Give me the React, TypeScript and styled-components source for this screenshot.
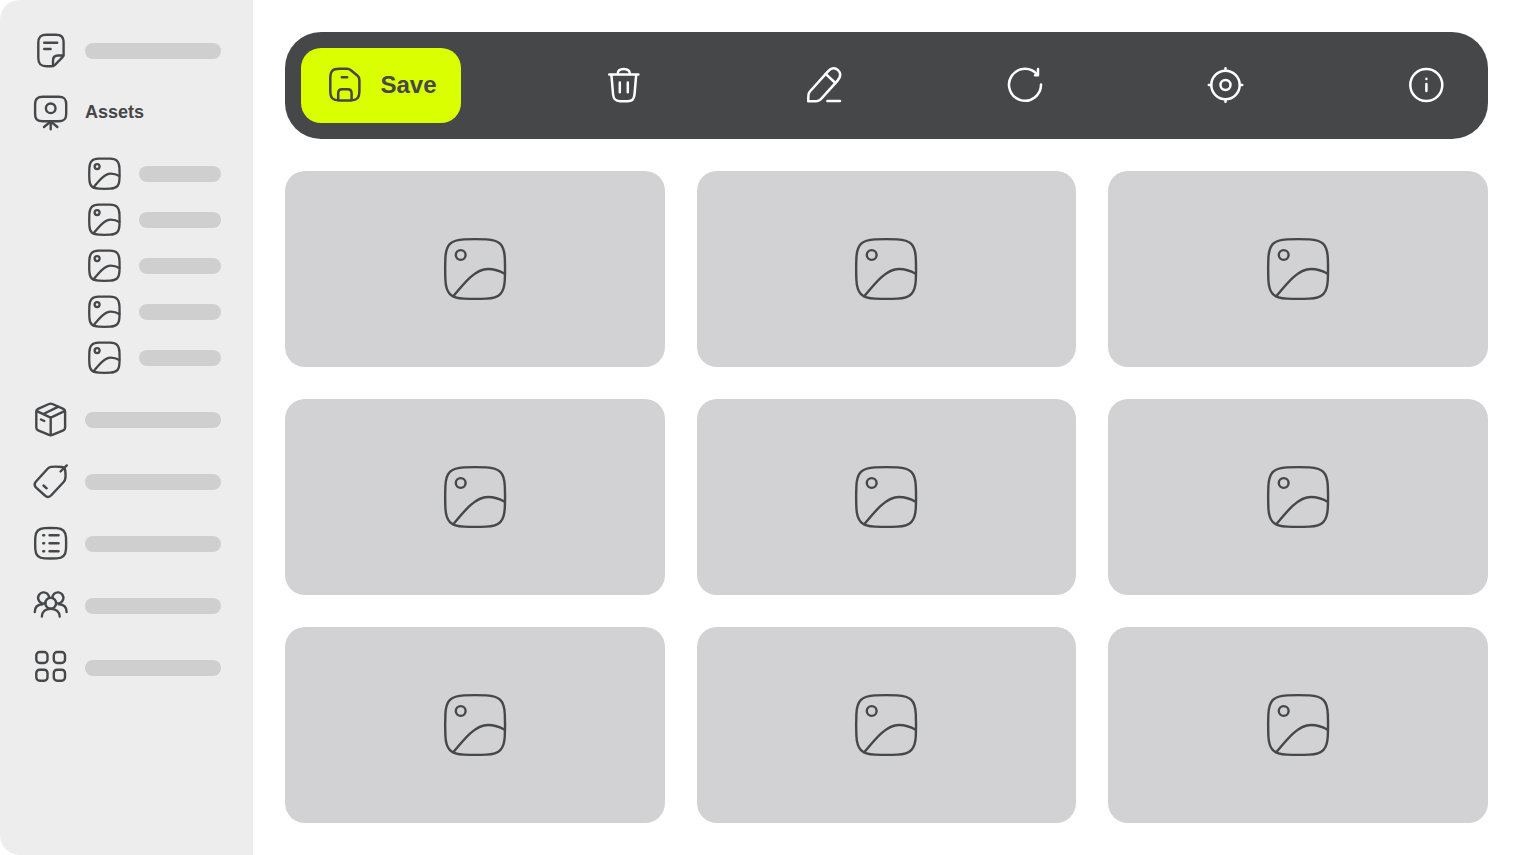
import React from "react";
import styled, { createGlobalStyle } from "styled-components";

const ink = "#464749";

const GlobalStyle = createGlobalStyle`
  *, *::before, *::after { box-sizing: border-box; }
  body {
    margin: 0;
    background: #ffffff;
    color: ${ink};
    font-family: "Liberation Sans", Arial, sans-serif;
  }
`;

const Page = styled.div`
  display: flex;
  min-height: 100vh;
`;

const Sidebar = styled.nav`
  flex: 0 0 253px;
  padding: 32px;
  background: #ededed;
  border-radius: 20px 0 0 20px;
`;

const NavList = styled.ul`
  display: flex;
  flex-direction: column;
  gap: 25px;
  margin: 0;
  padding: 0;
  list-style: none;
`;

const SubList = styled(NavList)`
  gap: 9px;
  margin-top: 24px;
  padding-left: 54px;
`;

const NavLink = styled.a`
  display: flex;
  align-items: center;
  gap: 16px;
  height: 37px;
  color: inherit;
  font-size: 18px;
  font-weight: 700;
  text-decoration: none;
`;

const Placeholder = styled.span`
  flex: 1;
  height: 16px;
  border-radius: 8px;
  background: #cfcfcf;
`;

const Glyph = styled.svg<{ $size: number; $weight: number }>`
  display: block;
  flex: none;
  width: ${(p) => p.$size}px;
  height: ${(p) => p.$size}px;
  fill: none;
  stroke: currentColor;
  stroke-width: ${(p) => p.$weight};
  stroke-linecap: round;
  stroke-linejoin: round;
`;

const Main = styled.main`
  flex: 1;
  display: flex;
  flex-direction: column;
  gap: 32px;
  min-width: 0;
  padding: 32px;
`;

const Toolbar = styled.div`
  display: flex;
  align-items: center;
  justify-content: space-between;
  padding: 16px 24px 16px 16px;
  border-radius: 36px;
  background: ${ink};
`;

const ToolButton = styled.button`
  display: flex;
  align-items: center;
  justify-content: center;
  width: 76px;
  height: 75px;
  padding: 0 0 1px;
  border: 0;
  background: none;
  color: #ffffff;
  font: inherit;
  cursor: pointer;
`;

const SaveButton = styled(ToolButton)`
  gap: 15px;
  width: 160px;
  border-radius: 20px;
  background: #daff00;
  color: ${ink};
  font-size: 24px;
  font-weight: 700;
`;

const Gallery = styled.div`
  flex: 1;
  display: grid;
  grid-template-columns: repeat(3, 1fr);
  grid-auto-rows: minmax(160px, 1fr);
  gap: 32px;
`;

const Card = styled.figure`
  display: flex;
  align-items: center;
  justify-content: center;
  margin: 0;
  border-radius: 20px;
  background: #d2d2d4;
`;

type IconProps = { children: React.ReactNode };

const NavIcon = ({ children }: IconProps) => (
  <Glyph $size={37} $weight={2.4} viewBox="0 0 37 37" aria-hidden="true">
    {children}
  </Glyph>
);

const ToolIcon = ({ children }: IconProps) => (
  <Glyph $size={40} $weight={2.5} viewBox="0 0 40 40" aria-hidden="true">
    {children}
  </Glyph>
);

const PictureShape = () => (
  <>
    <path d="M21 2.4C28 2.1 36.3 2.1 43.3 2.4C56.5 3 61.2 7.7 61.8 21C62.1 28 62.1 36 61.8 43C61.2 56.3 56.5 61 43.3 61.6C36.3 61.9 28 61.9 21 61.6C7.7 61 3 56.3 2.4 43C2.1 36 2.1 28 2.4 21C3 7.7 7.7 3 21 2.4Z" />
    <circle cx="17.7" cy="18" r="4.9" />
    <path d="M10.3 59.3C22 45 32.5 32 45 32C51 32 57 34 61.7 36.7" />
  </>
);

const SmallPicture = () => (
  <Glyph $size={37} $weight={4.5} viewBox="-4.2 -4.8 73 73" aria-hidden="true">
    <PictureShape />
  </Glyph>
);

const LargePicture = () => (
  <Glyph $size={64} $weight={2.4} viewBox="0 0 64 64" aria-hidden="true">
    <PictureShape />
  </Glyph>
);

const NoteIcon = () => (
  <NavIcon>
    <path d="M31.6 22.5V11C31.6 5 29.5 2.8 23.5 2.8H14.5C8.5 2.8 6.3 5 6.3 11V26C6.3 32 8.5 34.2 14.5 34.2H19.5C21 34.2 22 33.8 23 32.8L30.3 25.3C31.2 24.4 31.6 23.6 31.6 22.5Z" />
    <path d="M21 34V28.5C21 24.8 22.5 23.5 26 23.5H31.4M12.2 10.7H25.2M12.2 17H18.6" />
  </NavIcon>
);

const BoardIcon = () => (
  <NavIcon>
    <path d="M11 2.8H26.5C32.2 2.8 34.2 4.8 34.2 10.5V19.7C34.2 25.4 32.2 27.3 26.5 27.3H11C5.3 27.3 3.1 25.4 3.1 19.7V10.5C3.1 4.8 5.3 2.8 11 2.8Z" />
    <circle cx="18.7" cy="14.3" r="4.8" />
    <path d="M18.7 27.5V35.2M18.2 27.8L12 33M19.2 27.8L25.4 33" />
  </NavIcon>
);

const BoxIcon = () => (
  <NavIcon>
    <path d="M17 3C18.2 2.5 19.2 2.5 20.4 3L31.3 7.9C32.5 8.5 33.1 9.3 33.1 10.6V26.6C33.1 27.9 32.5 28.8 31.3 29.3L20.4 33.9C19.2 34.4 18.2 34.4 17 33.9L6.1 29.3C4.9 28.8 4.3 27.9 4.3 26.6V10.6C4.3 9.3 4.9 8.5 6.1 7.9Z" />
    <path d="M4.9 10.2L17 15.8C18.2 16.3 19.2 16.3 20.4 15.8L32.5 10.2M18.7 16.4V34M11.4 13L26 5.8M9 18.5L12.3 20" />
  </NavIcon>
);

const TagIcon = () => (
  <NavIcon>
    <path d="M19 3.9C23 3.4 26.5 3.6 29.8 4C32.2 4.3 33 5.2 33.2 7.5C33.6 10.5 33.7 13 33.3 15.5C33.1 17 32.6 17.9 31.6 19L19.3 32.3C17.2 34.5 15 34.5 12.9 32.5L4.4 24.9C2.2 22.9 2 20.8 4 18.5L15.6 5.8C16.6 4.7 17.5 4.1 19 3.9Z" />
    <path d="M28.5 8.5L34.8 2.4M11.5 22.5L14.7 25.3" />
  </NavIcon>
);

const ListIcon = () => (
  <NavIcon>
    <path d="M12.5 3.1C16.5 2.9 20.8 2.9 24.8 3.1C31 3.4 33.7 6.1 34 12.3C34.2 16 34.2 20 34 24.2C33.7 30.4 31 33.1 24.8 33.4C20.8 33.6 16.5 33.6 12.5 33.4C6.3 33.1 3.6 30.4 3.3 24.2C3.1 20 3.1 16 3.3 12.3C3.6 6.1 6.3 3.4 12.5 3.1Z" />
    <path d="M11.2 10.2H12.2M11.2 18.2H12.2M11.2 26.2H12.2M17.5 10.2H26.6M17.5 18.2H26.6M17.5 26.2H26.6" />
  </NavIcon>
);

const PeopleIcon = () => (
  <NavIcon>
    <path d="M13.5 16A5.5 5.5 0 1 1 17.1 10.8M24 16A5.5 5.5 0 1 0 20.4 10.8" />
    <circle cx="18.7" cy="16.2" r="5.4" />
    <path d="M9.9 29.6C9.9 25 13.3 21.7 18.7 21.7S27.7 25 27.7 29.6M2.8 25C2.8 20.5 5.5 17.5 10.5 17.3M34.6 25C34.6 20.5 31.9 17.5 26.9 17.3" />
  </NavIcon>
);

const GridIcon = () => (
  <NavIcon>
    <rect x="4.3" y="3" width="11.2" height="11" rx="3.4" />
    <rect x="21.8" y="3" width="11.2" height="11" rx="3.4" />
    <rect x="4.3" y="20.7" width="11.2" height="11" rx="3.4" />
    <rect x="21.8" y="20.7" width="11.2" height="11" rx="3.4" />
  </NavIcon>
);

const SaveIcon = () => (
  <ToolIcon>
    <path d="M14.5 3.8H22C23.7 3.8 24.7 4.2 25.9 5.2L32.3 10.5C33.9 11.8 34.4 13 34.4 15V25.5C34.4 33 32.2 35.4 24.9 35.4H14.7C7.5 35.4 5.3 33 5.3 25.5V13.5C5.3 6 7.5 3.8 14.5 3.8Z" />
    <path d="M13.2 35.2V28.2C13.2 25.4 14.4 24.3 17 24.3H22.8C25.4 24.3 26.6 25.4 26.6 28.2V35.2M16.8 12.2H22.2" />
  </ToolIcon>
);

const TrashIcon = () => (
  <ToolIcon>
    <path d="M5.2 9.4H34.4M13.6 9.2C13.6 5.6 15.6 3.9 19.8 3.9S26 5.6 26 9.2M7.4 9.8L9.1 29.5C9.6 34.4 11.4 36.2 15.8 36.2H23.8C28.2 36.2 30 34.4 30.5 29.5L32.2 9.8M15.8 17.5V27.3M23.8 17.5V27.3" />
  </ToolIcon>
);

const PencilIcon = () => (
  <ToolIcon>
    <path d="M4.2 36.2L4.4 30.5C4.5 28.8 4.8 27.8 5.9 26.5L24 6.4C27.4 2.6 31 2.4 34 5.2C37 8.1 36.9 11.8 33.6 15.6L16.9 34.2C15.4 35.7 14.2 36.2 12.4 36.2Z" />
    <path d="M21.6 8.8L31.4 18M23.4 35.9H36" />
  </ToolIcon>
);

const RefreshIcon = () => (
  <ToolIcon>
    <path d="M36 19.4A16 16 0 1 1 32.6 9.9M33 4V10.2H30" />
  </ToolIcon>
);

const TargetIcon = () => (
  <ToolIcon>
    <circle cx="20.5" cy="20" r="14.2" />
    <circle cx="20.5" cy="20" r="5" />
    <path d="M20.5 3.3V5.5M20.5 34.5V36.7M3.8 20H6M35 20H37.2" />
  </ToolIcon>
);

const InfoIcon = () => (
  <ToolIcon>
    <circle cx="20.3" cy="20" r="16" />
    <path d="M20.4 19V26M20.4 13.8V13.9" />
  </ToolIcon>
);

const tools = [
  { label: "Delete", Icon: TrashIcon },
  { label: "Edit", Icon: PencilIcon },
  { label: "Refresh", Icon: RefreshIcon },
  { label: "Locate", Icon: TargetIcon },
  { label: "Info", Icon: InfoIcon },
];

const sections = [
  { label: "Products", Icon: BoxIcon },
  { label: "Tags", Icon: TagIcon },
  { label: "Lists", Icon: ListIcon },
  { label: "People", Icon: PeopleIcon },
  { label: "Apps", Icon: GridIcon },
];

export default function App() {
  return (
    <>
      <GlobalStyle />
      <Page>
        <Sidebar>
          <NavList>
            <li>
              <NavLink href="#notes" aria-label="Notes">
                <NoteIcon />
                <Placeholder />
              </NavLink>
            </li>
            <li>
              <NavLink href="#assets">
                <BoardIcon />
                Assets
              </NavLink>
              <SubList>
                {[1, 2, 3, 4, 5].map((n) => (
                  <li key={n}>
                    <NavLink href={`#asset-${n}`} aria-label={`Asset ${n}`}>
                      <SmallPicture />
                      <Placeholder />
                    </NavLink>
                  </li>
                ))}
              </SubList>
            </li>
            {sections.map(({ label, Icon }) => (
              <li key={label}>
                <NavLink href={`#${label.toLowerCase()}`} aria-label={label}>
                  <Icon />
                  <Placeholder />
                </NavLink>
              </li>
            ))}
          </NavList>
        </Sidebar>
        <Main>
          <Toolbar role="toolbar">
            <SaveButton type="button">
              <SaveIcon />
              Save
            </SaveButton>
            {tools.map(({ label, Icon }) => (
              <ToolButton key={label} type="button" aria-label={label}>
                <Icon />
              </ToolButton>
            ))}
          </Toolbar>
          <Gallery>
            {Array.from({ length: 9 }, (_, i) => (
              <Card key={i}>
                <LargePicture />
              </Card>
            ))}
          </Gallery>
        </Main>
      </Page>
    </>
  );
}
